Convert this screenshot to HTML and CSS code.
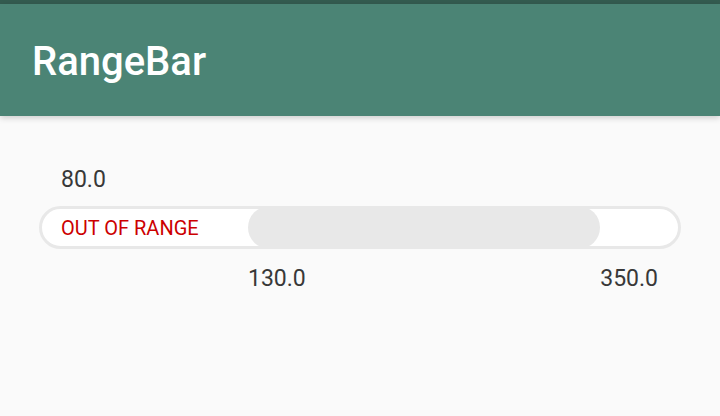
FILE: index.html
```html
<!DOCTYPE html>
<html>
<head>
<meta charset="utf-8">
<link rel="stylesheet" href="styles.css">
</head>
<body>
<div class="status"></div>
<header class="appbar"><h1 class="title">RangeBar</h1></header>
<main class="content">
  <div class="min-label">80.0</div>
  <div class="track">
    <span class="out">OUT OF RANGE</span>
    <div class="fill" style="left: 206px; width: 352px;"></div>
  </div>
  <div class="values">
    <span class="val">130.0</span>
    <span class="val">350.0</span>
  </div>
</main>
</body>
</html>
```

FILE: styles.css
```css
html, body {
  margin: 0;
  padding: 0;
}
body {
  width: 720px;
  height: 416px;
  background: #fafafa;
  font-family: Roboto, "Noto Sans", sans-serif;
  overflow: hidden;
}
.status {
  height: 4px;
  background: #345c50;
}
.appbar {
  height: 112px;
  background: #4b8475;
  display: flex;
  align-items: center;
  padding-left: 32px;
  box-shadow: 0 2px 6px rgba(0,0,0,0.18);
  position: relative;
  z-index: 1;
}
.title {
  margin: 0;
  color: #ffffff;
  font-size: 40px;
  font-weight: 500;
  line-height: 48px;
  padding-top: 4px;
}
.content {
  display: flex;
  flex-direction: column;
  padding-top: 50px;
}
.min-label {
  font-size: 23px;
  line-height: 28px;
  color: #383838;
  padding-left: 61px;
}
.track {
  position: relative;
  margin-top: 12px;
  margin-left: 39px;
  width: 642px;
  height: 43px;
  box-sizing: border-box;
  border: 3px solid #e8e8e8;
  border-radius: 22px;
  background: #ffffff;
  display: flex;
  align-items: center;
}
.out {
  padding-left: 19px;
  font-size: 20px;
  color: #cc0000;
}
.fill {
  position: absolute;
  top: -3px;
  bottom: -3px;
  background: #e8e8e8;
  border-radius: 22px;
}
.values {
  display: flex;
  justify-content: space-between;
  padding-left: 248px;
  padding-right: 62px;
  margin-top: 16px;
  font-size: 23px;
  line-height: 28px;
  color: #383838;
}
```
